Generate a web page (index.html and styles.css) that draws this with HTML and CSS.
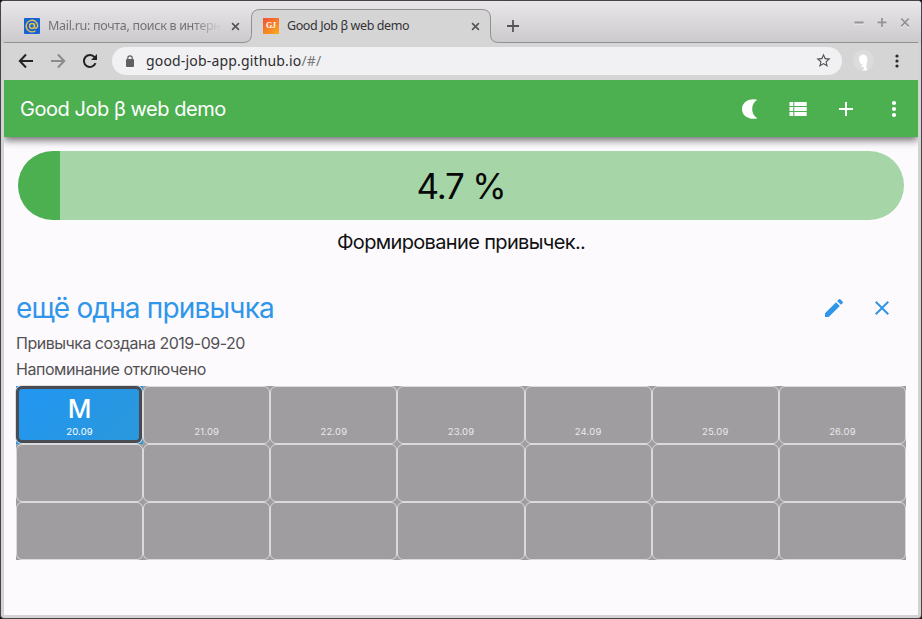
FILE: index.html
```html
<!DOCTYPE html>
<html lang="ru">
<head>
<meta charset="utf-8">
<title>Good Job β web demo</title>
<link rel="stylesheet" href="styles.css">
</head>
<body>
<div class="window">
  <header class="tabstrip">
    <svg class="tab-shape" width="914" height="42" viewBox="4 1 914 42"><path d="M4 42.500H243Q251.500 42.500 251.500 34.500V18Q251.500 9.500 260 9.500H482Q490.500 9.500 490.500 18V34.500Q490.500 42.500 498.500 42.500H918V44H4Z" fill="#d6d5d6"/><path d="M4 42.500H243Q251.500 42.500 251.500 34.500V18Q251.500 9.500 260 9.500H482Q490.500 9.500 490.500 18V34.500Q490.500 42.500 498.500 42.500H918" fill="none" stroke="#929092"/></svg>
    <div class="tab inactive">
      <svg class="favicon" viewBox="0 0 16 16"><rect width="16" height="16" rx="1" fill="#1462d6"/><g fill="none" stroke="#e3c04c" stroke-width="1.400"><circle cx="8" cy="8" r="2.500"/><path d="M10.500 5.500V9Q10.700 10.800 12.200 10.200Q13.800 9 13.700 7.200A5.800 5.800 0 1 0 11.500 12.700"/></g></svg>
      <span class="tab-title">Mail.ru: почта, поиск в интерн</span>
      <svg class="tab-close" viewBox="0 0 10 10"><path d="M1.200 1.200 8.800 8.800M8.800 1.200 1.200 8.800"/></svg>
    </div>
    <div class="tab active">
      <span class="gj">GJ</span>
      <span class="tab-title">Good Job β web demo</span>
      <svg class="tab-close" viewBox="0 0 10 10"><path d="M1.200 1.200 8.800 8.800M8.800 1.200 1.200 8.800"/></svg>
    </div>
    <svg class="new-tab" viewBox="0 0 12 12"><path d="M6 0V12M0 6H12"/></svg>
    <div class="controls">
      <svg viewBox="0 0 10 10"><path class="lo" d="M.5 6.500H9.500"/><path d="M.5 5H9.500"/></svg>
      <svg viewBox="0 0 10 10"><path class="lo" d="M.5 6H9.500M5 1.500V10"/><path d="M.5 5H9.500M5 .5V9.500"/></svg>
      <svg viewBox="0 0 10 10"><path class="lo" d="M1.200 2.400 8.800 10M8.800 2.400 1.200 10"/><path d="M1.200 1.200 8.800 8.800M8.800 1.200 1.200 8.800"/></svg>
    </div>
  </header>
  <nav class="toolbar">
    <svg class="nav-icon" viewBox="0 0 16 16"><path d="M15 8H2M8 1.500 1.800 8 8 14.500"/></svg>
    <svg class="nav-icon forward" viewBox="0 0 16 16"><path d="M1 8H14M8 1.500 14.200 8 8 14.500"/></svg>
    <svg class="nav-icon reload" viewBox="0 0 16 16"><path d="M13.500 10.200A6 6 0 1 1 12.600 4.200L14 5.800"/><path d="M15 1V7H9Z" fill="#242324" stroke="none"/></svg>
    <div class="address">
      <svg class="lock" viewBox="0 0 8 12"><rect y="4" width="8" height="8" rx="1" fill="#5f6062"/><path d="M1.800 5V3A2.200 2.200 0 0 1 6.200 3V5" fill="none" stroke="#5f6062" stroke-width="1.200"/></svg>
      <span class="url">good-job-app.github.io<span>/#/</span></span>
      <svg class="star" viewBox="0 0 24 24"><path d="M22 9.240l-7.190-.620L12 2 9.190 8.630 2 9.240l5.460 4.730L5.820 21 12 17.270 18.180 21l-1.630-7.030L22 9.240zM12 15.400l-3.760 2.270 1-4.280-3.320-2.880 4.380-.380L12 6.100l1.710 4.040 4.380.380-3.320 2.880 1 4.280L12 15.400z"/></svg>
    </div>
    <svg class="avatar" viewBox="0 0 20 20"><circle cx="10" cy="10" r="10" fill="#dddcdd"/><path d="M6.500 14.500Q8 15.500 9.500 14L7 13Q5 9.500 6 6.500Q8 3.500 11 4.500Q14.500 6 13.500 11L12.500 15L13.500 19.500H9L11 17Q8 16 6.500 14.500Z" fill="#fff"/></svg>
    <svg class="browser-menu" viewBox="0 0 4 14"><circle cx="2" cy="2" r="1.600"/><circle cx="2" cy="7" r="1.600"/><circle cx="2" cy="12" r="1.600"/></svg>
  </nav>
  <main class="page">
    <div class="appbar">
      <h1>Good Job β web demo</h1>
      <svg viewBox="0 0 24 24"><path d="M19.300 2.800C14.500.8 4 3.200 4 12S14.500 23.200 19.300 21.200C12.500 17.500 12.500 6.500 19.300 2.800Z"/></svg>
      <svg viewBox="0 0 24 24"><path d="M3.500 5H7.300V9H3.500ZM8.300 5H20.700V9H8.300ZM3.500 10.100H7.300V14H3.500ZM8.300 10.100H20.700V14H8.300ZM3.500 15.100H7.300V19H3.500ZM8.300 15.100H20.700V19H8.300Z"/></svg>
      <svg viewBox="0 0 24 24"><path d="M19 13h-6v6h-2v-6H5v-2h6V5h2v6h6v2z"/></svg>
      <svg viewBox="0 0 24 24"><circle cx="12" cy="6" r="2.100"/><circle cx="12" cy="12" r="2.100"/><circle cx="12" cy="18" r="2.100"/></svg>
    </div>
    <div class="progress"><span class="percent">4.7 %</span></div>
    <p class="caption"><span>Формирование привычек..</span></p>
    <section class="habit">
      <div class="habit-head">
        <h2>ещё одна привычка</h2>
        <svg viewBox="0 0 24 24"><path d="M3 17.250V21h3.750L17.810 9.940l-3.750-3.750L3 17.250zM20.710 7.040a1 1 0 0 0 0-1.410l-2.340-2.340a1 1 0 0 0-1.410 0l-1.830 1.830 3.750 3.750 1.830-1.830z"/></svg>
        <svg viewBox="0 0 24 24"><path d="M19 6.410 17.590 5 12 10.590 6.410 5 5 6.410 10.590 12 5 17.590 6.410 19 12 13.410 17.590 19 19 17.590 13.410 12z"/></svg>
      </div>
      <p class="created">Привычка создана 2019-09-20</p>
      <p class="reminder">Напоминание отключено</p>
      <div class="days">
        <div class="day today"><b>М</b><span>20.09</span></div>
        <div class="day"><span>21.09</span></div>
        <div class="day"><span>22.09</span></div>
        <div class="day"><span>23.09</span></div>
        <div class="day"><span>24.09</span></div>
        <div class="day"><span>25.09</span></div>
        <div class="day"><span>26.09</span></div>
        <div class="day"></div><div class="day"></div><div class="day"></div><div class="day"></div><div class="day"></div><div class="day"></div><div class="day"></div>
        <div class="day"></div><div class="day"></div><div class="day"></div><div class="day"></div><div class="day"></div><div class="day"></div><div class="day"></div>
      </div>
    </section>
  </main>
</div>
</body>
</html>
```
FILE: styles.css
```css
* { box-sizing: border-box; }
html { background: #111; }
body { margin: 0; height: 619px; overflow: hidden; font-family: "Noto Sans", sans-serif; }
h1, h2, p { margin: 0; font-weight: 400; }
svg { flex: none; display: block; }
span, h1, h2, p { white-space: nowrap; }
.window { width: 922px; height: 619px; padding: 0 3px 3px; border: 1px solid #464446; border-radius: 4px; background: #d4d3d4; overflow: hidden; }
.tabstrip { position: relative; display: flex; align-items: center; height: 42px; margin: 0 -3px; padding: 8px 3px 0; background: linear-gradient(#e9e7e9, #cbc9cc); }
.tab-shape { position: absolute; left: 3px; top: 0; }
.tab { position: relative; display: flex; align-items: center; height: 34px; font-size: 12.500px; }
.inactive { width: 247px; padding-left: 20px; color: #737274; }
.active { width: 239px; padding-left: 12px; color: #343335; }
.favicon, .gj { width: 16px; height: 16px; flex: none; }
.gj { background: linear-gradient(145deg, #ee503b, #fbad17); color: #fff; font: bold 8px/16px "Liberation Serif", serif; text-align: center; }
.tab-title { margin-left: 8px; width: 174px; letter-spacing: -.4px; margin-top: -2px; }
.inactive .tab-title { letter-spacing: -.3px; mask-image: linear-gradient(90deg, #000 145px, transparent 173px); }
.tab-close { width: 9px; height: 9px; margin-left: 9px; stroke: #555456; stroke-width: 1.800; }
.active .tab-title { width: 175px; }
.new-tab { width: 12px; height: 12px; margin-left: 17px; stroke: #555456; stroke-width: 1.800; position: relative; }
.controls { display: flex; gap: 13px; margin: -7px 8px 0 auto; position: relative; }
.controls svg { width: 10px; height: 11px; overflow: visible; stroke: #949395; stroke-width: 1.800; }
.controls .lo { stroke: #f4f3f4; stroke-width: 1.200; }
.toolbar { display: flex; align-items: center; height: 37px; padding: 0 0 2px 14px; background: #d6d5d6; }
.nav-icon { width: 16px; height: 16px; margin-right: 16px; fill: none; stroke: #242324; stroke-width: 2; }
.forward { stroke: #8c8b8c; }
.address { display: flex; align-items: center; width: 730px; height: 28px; margin-left: -2px; padding-left: 14px; border-radius: 14px; background: #f1f1f3; }
.lock { width: 8px; height: 12px; }
.url { margin-left: 12px; font-size: 14px; line-height: 20px; letter-spacing: .17px; color: #2e2e30; }
.url span { color: #777; }
.star { width: 17px; height: 17px; margin: 0 10px 0 auto; fill: #555; }
.avatar { width: 21px; height: 21px; margin-left: 11px; }
.browser-menu { width: 4px; height: 14px; margin-left: 21px; fill: #2b2a2b; }
.page { height: 535px; background: #fcfafd; font-family: Inter, sans-serif; display: flex; flex-direction: column; overflow: hidden; }
.appbar { display: flex; align-items: center; flex: none; height: 57px; padding: 0 12px 0 16px; gap: 24px; background: #4caf50; color: #fff; box-shadow: 0 3px 8px rgba(0,0,0,.6); }
.appbar h1 { font-size: 20px; letter-spacing: -.46px; margin-right: auto; }
.appbar svg { width: 24px; height: 24px; fill: #fff; }
.progress { display: flex; flex: none; align-items: center; justify-content: center; height: 69px; margin: 14px 14px 0; border-radius: 35px; background: linear-gradient(90deg, #4caf50 42px, #a6d6a8 42px); }
.percent { font-size: 35px; letter-spacing: -1.200px; color: #080808; }
.caption { text-align: center; font-size: 20px; line-height: 28px; letter-spacing: -.65px; margin-top: 8px; color: #111; }
.habit { margin: 28px 12px 0; }
.habit-head { display: flex; align-items: center; height: 48px; padding-right: 12px; gap: 24px; }
.habit h2 { font-size: 28px; letter-spacing: -.82px; color: #2f96ea; margin-right: auto; }
.habit-head svg { width: 24px; height: 24px; fill: #2f96ea; }
.created, .reminder { font-size: 16px; line-height: 26px; color: #535154; }
.created { margin-top: -2px; letter-spacing: -.5px; }
.reminder { letter-spacing: -.45px; }
.days { display: grid; grid-template-columns: repeat(7, 1fr); grid-auto-rows: 58px; width: 890px; margin-top: 4px; }
.day { position: relative; display: flex; flex-direction: column; align-items: center; justify-content: flex-end; padding-bottom: 6px; background: #9f9da0; color: #e9e9ea; font-size: 9.500px; line-height: 12px; }
.day span { letter-spacing: .15px; }
.day::after { content: ""; position: absolute; inset: 0; border: 1px solid #dad9db; border-radius: 6px; }
.today { background: linear-gradient(135deg, #2196f3, #2b98da); color: #fff; }
.today::after { border: 3px solid #494b50; border-radius: 6px; box-shadow: 0 0 0 1px #dcdcde; inset: 0 1px 1px 0; }
.today b { font-size: 26px; line-height: 30px; font-weight: 500; margin-bottom: 2px; }
```
